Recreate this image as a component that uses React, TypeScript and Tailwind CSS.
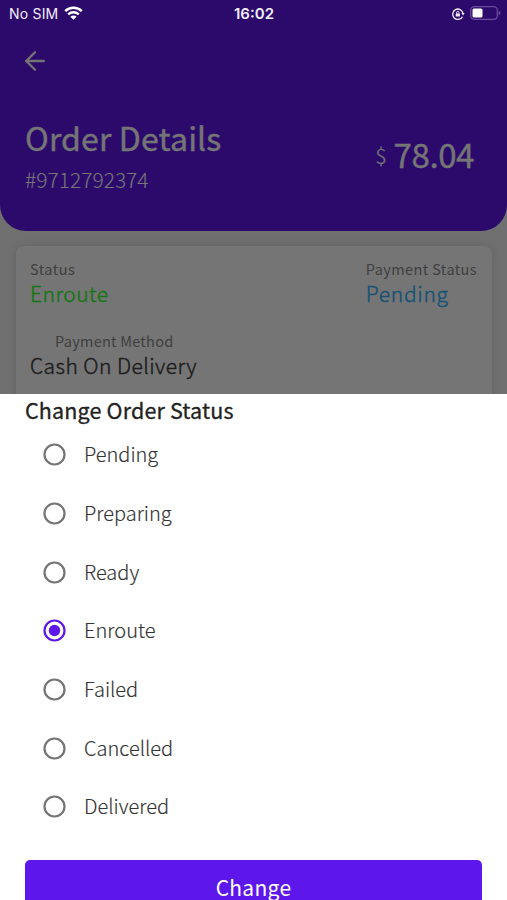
import { useState } from "react";
import { ArrowLeft } from "lucide-react";

const STATUSES = ["Pending", "Preparing", "Ready", "Enroute", "Failed", "Cancelled", "Delivered"];

function StatusBar() {
  return (
    <div className="absolute inset-x-0 top-0 z-20 flex h-7 items-center justify-between pl-[9px] pr-[6px] font-['Inter',sans-serif] text-[#f4eefb]">
      <div className="flex w-40 items-center gap-[6px]">
        <span className="text-[14px] leading-7 tracking-[0.2px]">No SIM</span>
        <svg className="-mt-[2px] h-[14px] w-[19px]" viewBox="0 0 19 14" fill="none" stroke="white">
          <path d="M1.2 5.1a12 12 0 0 1 16.6 0" strokeWidth="2.5" />
          <path d="M4.2 8.3a7.7 7.7 0 0 1 10.6 0" strokeWidth="2.4" />
          <path d="M9.5 13.8 6.4 10.7a4.4 4.4 0 0 1 6.2 0z" fill="white" stroke="none" />
        </svg>
      </div>
      <span className="-ml-[2px] text-[15px] font-semibold leading-7">16:02</span>
      <div className="flex w-40 items-center justify-end gap-[5px]">
        <svg className="h-[14px] w-[14px]" viewBox="0 0 14 14" fill="none" stroke="#f4eefb" strokeWidth="1.3">
          <path d="M11.5 9.7A5.2 5.2 0 1 1 12 6.2" />
          <path d="m10.3 6.1 3.3 0-1.5 2.5z" fill="#f4eefb" stroke="none" />
          <path d="M5.6 6.8V5.6a1.2 1.2 0 0 1 2.4 0v1.2" strokeWidth="1" />
          <rect x="4.7" y="6.4" width="4.2" height="3.2" rx=".5" fill="#f4eefb" stroke="none" />
        </svg>
        <svg className="-mt-[2px] h-[14px] w-[31px]" viewBox="0 0 31 14" fill="none">
          <rect x=".7" y=".7" width="26.6" height="12.6" rx="3.5" stroke="#6c4a9c" strokeWidth="1.3" />
          <rect x="2.5" y="2.5" width="10" height="9" rx="1.6" fill="white" />
          <path d="M28.6 4.8c1.4.5 1.9 1.3 1.9 2.2s-.5 1.7-1.9 2.2z" fill="#6c4a9c" />
        </svg>
      </div>
    </div>
  );
}

function Header() {
  return (
    <header className="h-[230.5px] rounded-b-[26px] bg-[#5e17eb] px-[25px] pt-[46px] text-white">
      <ArrowLeft className="-ml-[5px] h-[30px] w-[30px]" strokeWidth={1.9} />
      <div className="mt-[38px] flex justify-between">
        <div>
          <h1 className="text-[32px] font-normal leading-[46px] tracking-[0.15px] [-webkit-text-stroke:0.3px_currentColor]">
            Order Details
          </h1>
          <p className="text-[21px] font-light leading-[39px]">#9712792374</p>
        </div>
        <div className="flex items-baseline gap-[6px] pr-[8px] pt-[17px]">
          <span className="relative -top-[4px] -left-px text-[21px] font-light [-webkit-text-stroke:0.2px_currentColor]">$</span>
          <span className="text-[33px] font-normal leading-[46px] tracking-[-0.4px] [-webkit-text-stroke:0.3px_currentColor]">
            78.04
          </span>
        </div>
      </div>
    </header>
  );
}

function OrderCard() {
  return (
    <section className="mx-[15.5px] mt-[15.5px] h-[300px] rounded-lg bg-white px-[14.5px] pt-[11px] shadow-[0_0_8px_rgba(0,0,0,0.12)]">
      <div className="flex justify-between">
        <div>
          <p className="text-[14.5px] leading-[23px] tracking-[0.5px] text-[#8c8c8c]">Status</p>
          <p className="text-[21px] font-light leading-[27px] tracking-[0.5px] text-[#2cff2c] [-webkit-text-stroke:0.4px_currentColor]">Enroute</p>
        </div>
        <div>
          <p className="text-[14.5px] leading-[23px] tracking-[0.4px] text-[#8c8c8c]">Payment Status</p>
          <p className="text-[21px] font-light leading-[27px] tracking-[0.7px] text-[#2fb2ff] [-webkit-text-stroke:0.4px_currentColor]">Pending</p>
        </div>
      </div>
      <p className="ml-[25px] mt-[22px] text-[14.5px] leading-[23px] tracking-[0.25px] text-[#8c8c8c]">Payment Method</p>
      <p className="text-[21px] font-light leading-[27px] tracking-[0.43px] text-[#404040] [-webkit-text-stroke:0.4px_currentColor]">Cash On Delivery</p>
    </section>
  );
}

function StatusOption({ label, checked, onSelect }: { label: string; checked: boolean; onSelect: () => void }) {
  return (
    <button type="button" role="radio" aria-checked={checked} onClick={onSelect} className="flex h-[58.65px] items-center gap-[18px]">
      <svg className="h-[23px] w-[23px]" viewBox="0 0 23 23" fill="none">
        <circle cx="11.5" cy="11.5" r="10" stroke={checked ? "#5e17eb" : "#747474"} strokeWidth="2.2" />
        {checked && <circle cx="11.5" cy="11.5" r="5.7" fill="#5e17eb" />}
      </svg>
      <span className="-mt-px text-[20px] font-light leading-7 text-[#333] [-webkit-text-stroke:0.15px_currentColor]">{label}</span>
    </button>
  );
}

export default function App() {
  const [status, setStatus] = useState("Enroute");

  return (
    <div className="relative h-[900px] w-[507px] overflow-hidden bg-[#f3f3f3] font-['Noto_Sans_CJK_SC','Noto_Sans',sans-serif]">
      <Header />
      <OrderCard />
      <div className="absolute inset-0 z-10 bg-black/54" />
      <StatusBar />

      <div className="absolute inset-x-0 bottom-0 top-[394px] z-20 overflow-hidden bg-white px-[25px]">
        <h2 className="pb-[1.5px] pt-[2px] text-[21.5px] font-normal leading-[28px] tracking-[0.15px] text-[#222] [-webkit-text-stroke:0.3px_currentColor]">
          Change Order Status
        </h2>
        <div role="radiogroup" className="ml-[18px] flex flex-col">
          {STATUSES.map((label) => (
            <StatusOption key={label} label={label} checked={status === label} onSelect={() => setStatus(label)} />
          ))}
        </div>
        <button type="button" className="mt-[24px] flex h-[60px] w-full justify-center rounded-[5px] bg-[#5e17eb] pt-[12px] text-[21px] leading-[31px] tracking-[0.3px] text-white">
          Change
        </button>
      </div>
    </div>
  );
}
